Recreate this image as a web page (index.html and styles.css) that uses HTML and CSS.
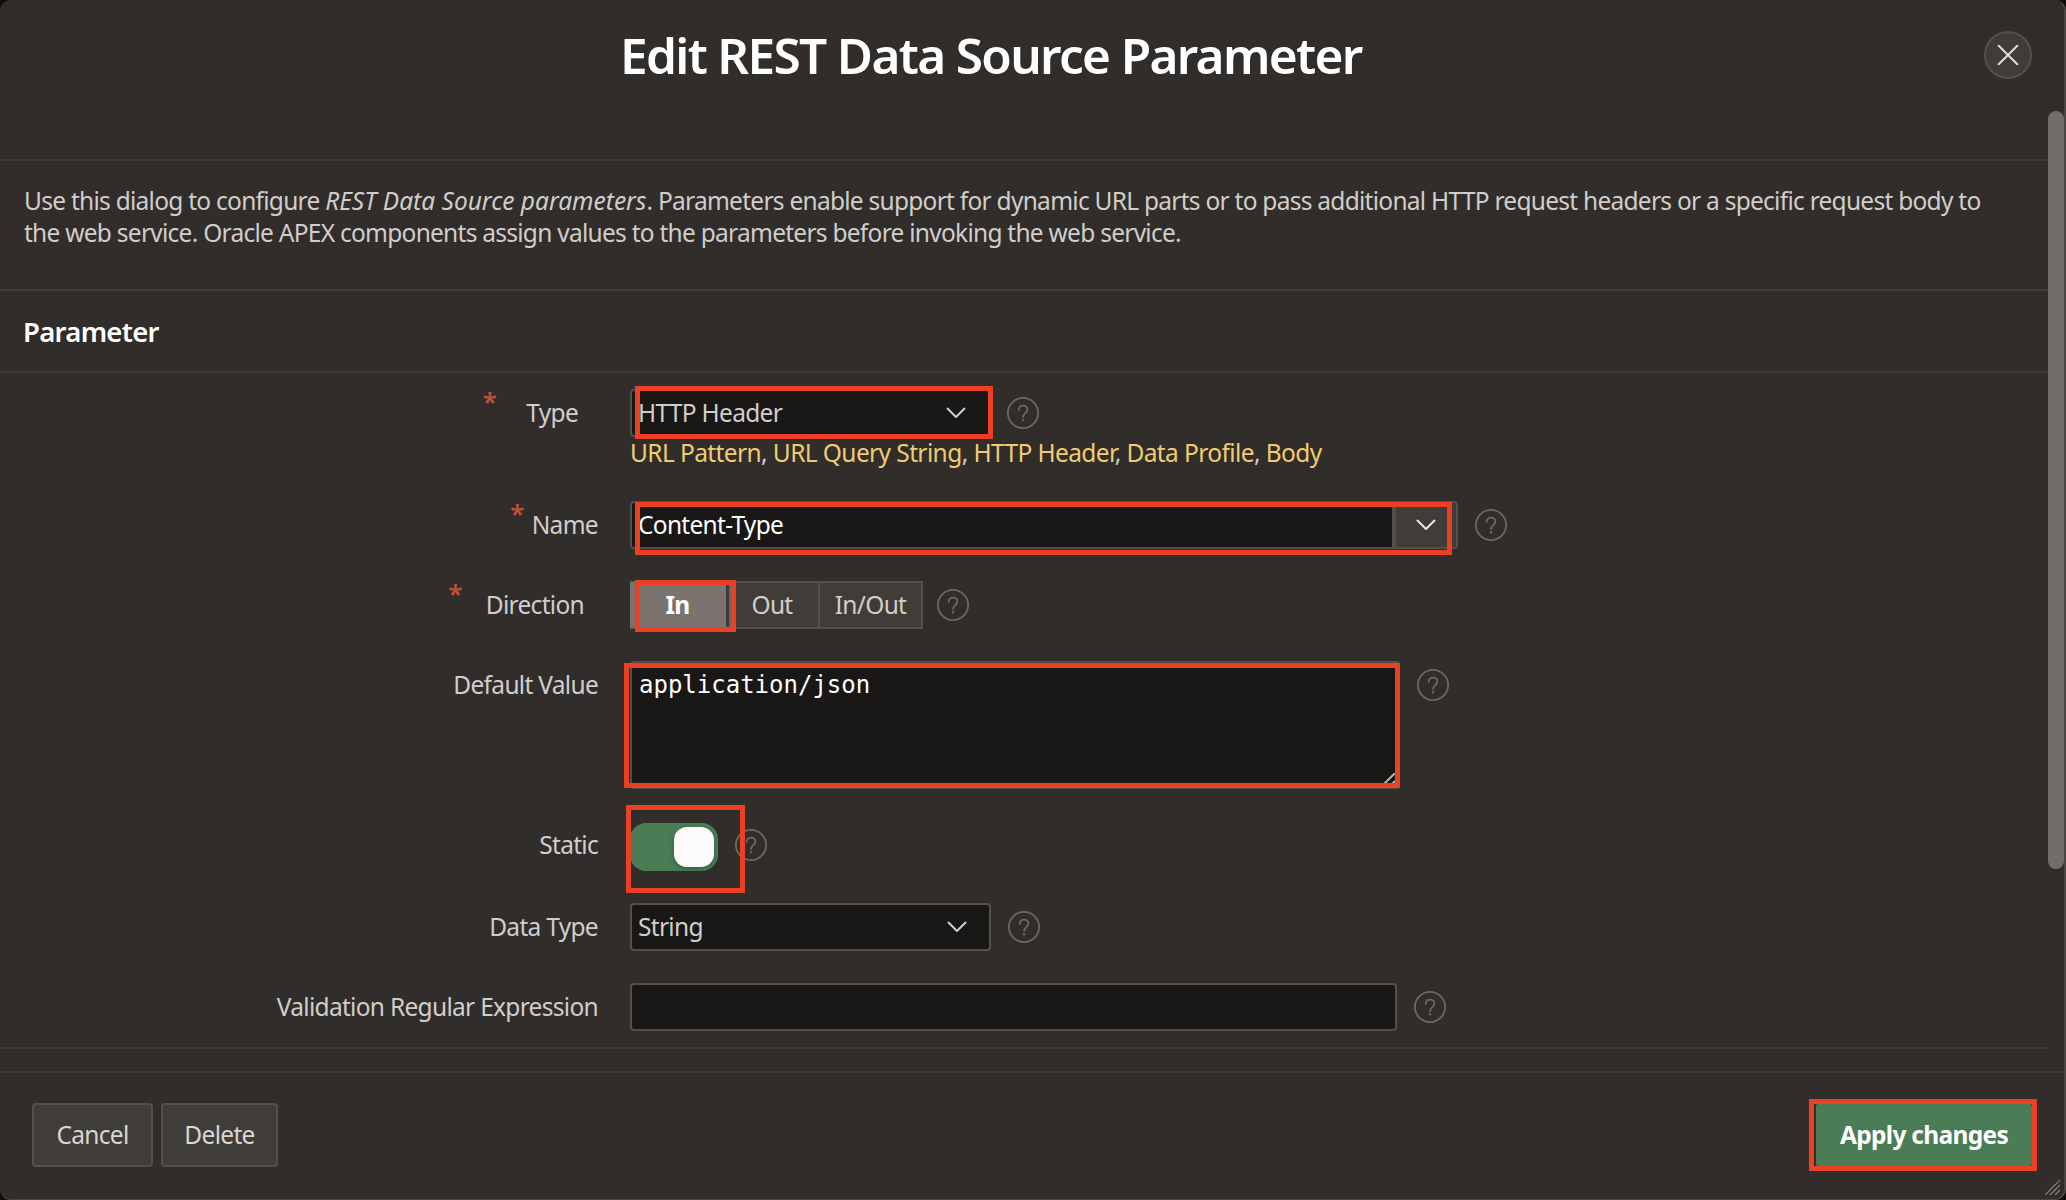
FILE: index.html
```html
<!DOCTYPE html>
<html lang="en">
<head>
<meta charset="utf-8">
<title>Edit REST Data Source Parameter</title>
<link rel="stylesheet" href="styles.css">
</head>
<body>
<svg class="sprite" aria-hidden="true">
  <symbol id="help" viewBox="0 0 32 32">
    <circle cx="16" cy="16" r="15.1" fill="none" stroke="currentColor" stroke-width="1.8"/>
    <path d="M11.7 12.9c0-2.6 1.9-4.3 4.4-4.3s4.3 1.7 4.3 4c0 3.4-4.3 3.6-4.3 7.4" fill="none" stroke="currentColor" stroke-width="1.8" stroke-linecap="round"/>
    <circle cx="16.1" cy="23.3" r="1.2" fill="currentColor"/>
  </symbol>
  <symbol id="chevron" viewBox="0 0 20 12">
    <path d="M1.5 1.5 10 10l8.500-8.500" fill="none" stroke="currentColor" stroke-width="2" stroke-linecap="round" stroke-linejoin="round"/>
  </symbol>
</svg>
<div class="dialog">
  <div class="main">
    <header class="header">
      <h1 class="title">Edit REST Data Source Parameter</h1>
      <button class="close" aria-label="Close">
        <svg width="22" height="22" viewBox="0 0 22 22"><path d="M1.700 1.700l18.600 18.600M20.300 1.700 1.700 20.300" stroke="currentColor" stroke-width="2" stroke-linecap="round"/></svg>
      </button>
    </header>
    <p class="intro">Use this dialog to configure <em>REST Data Source parameters</em>. Parameters enable support for dynamic URL parts or to pass additional HTTP request headers or a specific request body to<br>the web service. Oracle APEX components assign values to the parameters before invoking the web service.</p>
    <h2 class="section-title">Parameter</h2>
    <div class="form">
      <div class="row row-type">
        <div class="label label-type"><span class="star">*</span><span>Type</span></div>
        <div class="field">
          <div class="line">
            <div class="control select">HTTP Header<svg class="chevron"><use href="#chevron"/></svg><i class="mark mark-type"></i></div>
            <svg class="help"><use href="#help"/></svg>
          </div>
          <div class="links"><a>URL Pattern</a>, <a>URL Query String</a>, <a>HTTP Header</a>, <a>Data Profile</a>, <a>Body</a></div>
        </div>
      </div>
      <div class="row">
        <div class="label label-name"><span class="star">*</span><span>Name</span></div>
        <div class="line">
          <div class="control combo"><span class="combo-text">Content-Type</span><span class="combo-button"><svg class="chevron"><use href="#chevron"/></svg></span><i class="mark mark-name"></i></div>
          <svg class="help"><use href="#help"/></svg>
        </div>
      </div>
      <div class="row">
        <div class="label label-direction"><span class="star">*</span><span>Direction</span></div>
        <div class="line line-direction">
          <div class="pills">
            <span class="pill pill-in">In</span><span class="pill pill-out">Out</span><span class="pill pill-inout">In/Out</span>
            <i class="mark mark-direction"></i>
          </div>
          <svg class="help"><use href="#help"/></svg>
        </div>
      </div>
      <div class="row row-default">
        <div class="label">Default Value</div>
        <div class="line">
          <div class="control area">application/json
            <svg class="grip" width="12" height="12" viewBox="0 0 12 12"><path d="M0 12 12 0M8 12l4-4" stroke="#b5b1ab" stroke-width="2"/></svg>
            <i class="mark mark-default"></i>
          </div>
          <svg class="help"><use href="#help"/></svg>
        </div>
      </div>
      <div class="row row-static">
        <div class="label">Static</div>
        <div class="line">
          <div class="toggle"><span class="knob"></span><i class="mark mark-static"></i></div>
          <svg class="help"><use href="#help"/></svg>
        </div>
      </div>
      <div class="row">
        <div class="label">Data Type</div>
        <div class="line">
          <div class="control select select-data">String<svg class="chevron"><use href="#chevron"/></svg></div>
          <svg class="help"><use href="#help"/></svg>
        </div>
      </div>
      <div class="row">
        <div class="label">Validation Regular Expression</div>
        <div class="line">
          <div class="control text"></div>
          <svg class="help"><use href="#help"/></svg>
        </div>
      </div>
    </div>
    <div class="scrollbar"></div>
  </div>
  <footer class="footer">
    <button class="button cancel">Cancel</button>
    <button class="button delete">Delete</button>
    <div class="apply-wrap"><button class="button apply">Apply changes</button><i class="mark mark-apply"></i></div>
    <svg class="resize" width="15" height="15" viewBox="0 0 15 15"><path d="M0 15 15 0M5 15 15 5M10 15l5-5" stroke="#8a8680" stroke-width="1.200"/></svg>
  </footer>
</div>
</body>
</html>
```
FILE: styles.css
```css
* { box-sizing: border-box; }
body {
  margin: 0;
  background: #100f0e;
  color: #d0cecb;
  font: 24.5px/32px "Noto Sans", "Open Sans", sans-serif;
  letter-spacing: -0.7px;
}
.sprite { display: none; }
.dialog {
  position: relative;
  display: flex;
  flex-direction: column;
  width: 2066px;
  height: 1200px;
  overflow: hidden;
  background: #312d2a;
  border-right: 2px solid #4a4744;
  border-bottom: 1px solid #4a4744;
  border-radius: 11px;
}
.main { height: 1071px; padding-right: 16px; }

.header {
  position: relative;
  height: 161px;
  padding: 31px 16px 0 620px;
  display: flex;
  align-items: flex-start;
  justify-content: space-between;
  border-bottom: 2px solid #3f3c39;
}
.title {
  margin: 0;
  color: #fff;
  font-size: 49.5px;
  font-weight: 600;
  line-height: 48px;
  letter-spacing: -1.65px;
  white-space: nowrap;
}
.close {
  display: flex;
  align-items: center;
  justify-content: center;
  width: 48px;
  height: 48px;
  padding: 0;
  border: 2px solid #54514c;
  border-radius: 50%;
  background: #403c38;
  color: #dedcda;
}
.intro {
  height: 130px;
  margin: 0;
  padding: 24px 0 0 24px;
  border-bottom: 2px solid #3f3c39;
  white-space: nowrap;
  letter-spacing: -0.735px;
}
.intro em { letter-spacing: 0; }
.section-title {
  height: 82px;
  margin: 0;
  padding: 0 0 0 23px;
  border-bottom: 2px solid #3f3c39;
  color: #fff;
  font-size: 27.5px;
  font-weight: 600;
  line-height: 81px;
}

.form { height: 676px; padding-top: 16px; border-bottom: 2px solid #3f3c39; }
.row { display: flex; gap: 32px; height: 80px; }
.row-type { height: 112px; }
.row-default { height: 160px; }
.row-static { height: 82px; }
.label {
  display: flex;
  justify-content: flex-end;
  width: 598px;
  height: 48px;
  line-height: 48px;
  white-space: nowrap;
}
.label-type { padding-right: 20px; gap: 30px; }
.label-name { padding-right: 0; gap: 8px; }
.label-direction { padding-right: 14px; gap: 24px; }
.star { color: #c0503c; font-size: 26px; font-weight: 600; line-height: 24px; }
.line { display: flex; align-items: flex-start; gap: 17px; }
.line-direction { gap: 14px; }
.help { width: 32px; height: 32px; margin-top: 8px; color: #6c6864; }
.control {
  position: relative;
  height: 48px;
  border: 2px solid #53504c;
  border-radius: 4px;
  background: #191816;
  line-height: 44px;
}
.select { display: flex; width: 360px; padding: 0 22px 0 6px; justify-content: space-between; }
.select-data { width: 361px; }
.chevron { width: 20px; height: 12px; margin-top: 16px; color: #d0cecb; }
.links { color: #d0cecb; white-space: nowrap; letter-spacing: -0.6px; }
.links a { color: #f0cc71; }
.combo { display: flex; width: 828px; color: #fff; }
.combo-text { flex: 1; padding-left: 6px; }
.combo-button { width: 64px; padding-left: 20px; border-left: 4px solid #53504c; background: #403c38; }
.combo-button .chevron { display: block; color: #e8e6e4; }
.pills { position: relative; display: flex; height: 48px; }
.pill { border: 2px solid #53504c; border-left-width: 0; background: #403c38; line-height: 44px; text-align: center; }
.pill-in { width: 101px; padding-right: 4px; border-color: #67625e; background: linear-gradient(90deg, #7a736e 96px, #403c38 96px); color: #fff; font-weight: 700; }
.pill-out { width: 89px; padding-right: 5px; }
.pill-inout { width: 103px; }
.area { width: 770px; height: 128px; padding-left: 7px; color: #fff; font: 24px/44px "DejaVu Sans Mono", monospace; letter-spacing: 0; }
.grip { position: absolute; right: 3px; bottom: 2px; }
.text { width: 767px; }
.toggle { position: relative; width: 88px; height: 48px; margin-top: 2px; padding: 4px 4px 4px 44px; border-radius: 16px; background: #4a7d56; }
.knob { display: block; width: 40px; height: 40px; border-radius: 13px; background: #fcfbfa; box-shadow: 0 2px 6px rgba(0, 0, 0, .25); }

.mark { position: absolute; border: 5px solid #eb4026; pointer-events: none; }
.mark-type { inset: -5px -5px -4px 3px; }
.mark-name { inset: -1px 4px -8px 3px; }
.mark-direction { inset: -1px auto -3px 5px; width: 101px; }
.mark-default { inset: 0 -2px -1px -8px; }
.mark-static { inset: -18px -27px -22px -4px; z-index: 1; }
.mark-apply { inset: -4px -5px -4px -7px; }

.scrollbar { position: absolute; top: 111px; right: 0; width: 16px; height: 758px; border-radius: 8px; background: #716d69; }
.footer {
  position: relative;
  display: flex;
  gap: 8px;
  flex: 1;
  padding: 30px 32px 0;
  border-top: 2px solid #3f3c39;
}
.button {
  height: 64px;
  padding: 0;
  border: 2px solid #53504c;
  border-radius: 4px;
  background: #403c38;
  color: #d8d6d4;
  font: inherit;
  letter-spacing: inherit;
}
.cancel { width: 121px; }
.delete { width: 117px; }
.apply-wrap { position: relative; height: 64px; margin-left: auto; }
.apply { width: 216px; border-color: #4a7d56; background: #4a7d56; color: #fff; font-weight: 700; }
.resize { position: absolute; right: 4px; bottom: 4px; }
```
